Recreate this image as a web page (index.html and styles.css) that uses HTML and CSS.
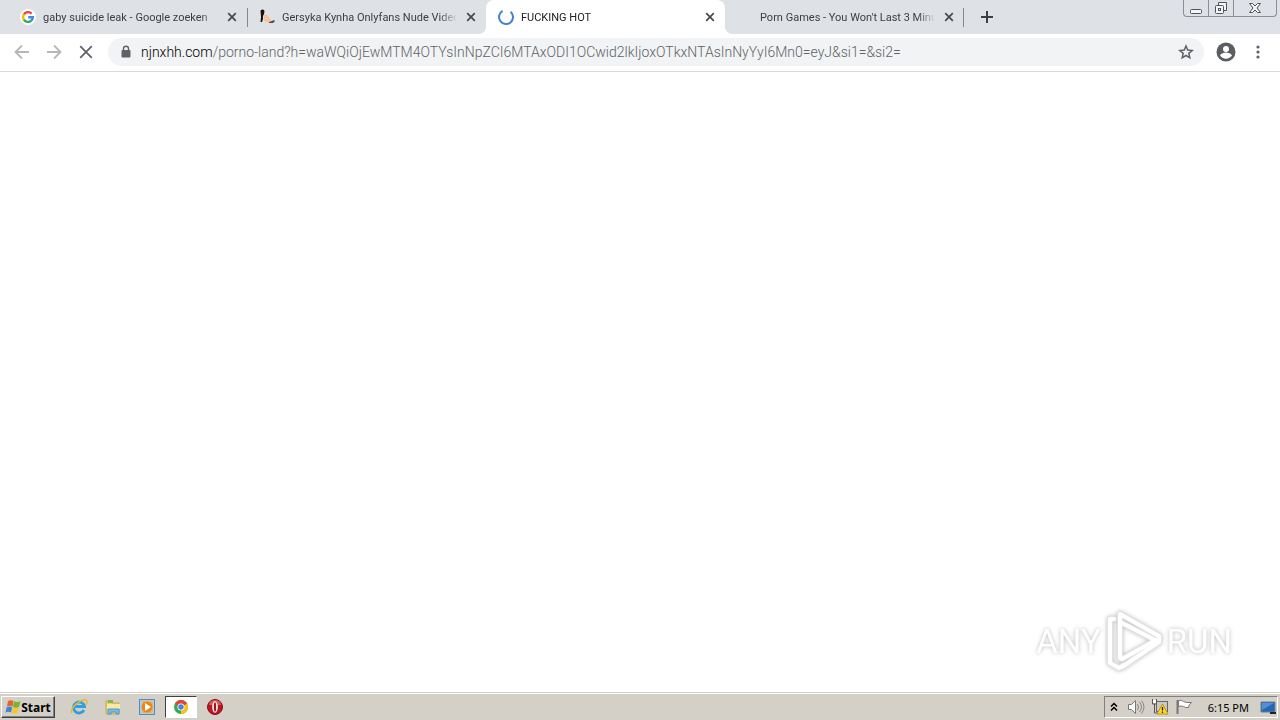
FILE: index.html
```html
<!DOCTYPE html>
<html lang="en">
<head>
<meta charset="utf-8">
<title>Browser desktop</title>
<link rel="stylesheet" href="styles.css">
</head>
<body>
<header class="tabstrip">
  <div class="tab">
    <svg class="favicon" viewBox="0 0 16 16"><circle cx="8" cy="8" r="8" fill="#fff"/><g fill="none" stroke-width="2.4"><path d="M4 5.4A4.8 4.8 0 0 1 11.6 4.6" stroke="#ea4335"/><path d="M4 5.2a4.8 4.8 0 0 0 0 5.6" stroke="#fbbc05"/><path d="M3.9 10.6a4.8 4.8 0 0 0 7.4 1" stroke="#34a853"/><path d="M8.2 8.2h4.6a4.8 4.8 0 0 1-1.6 3.5" stroke="#4285f4"/></g></svg>
    <button class="title">gaby suicide leak - Google zoeken</button>
    <button class="close" aria-label="Close tab"><svg viewBox="0 0 10 10"><path d="M1.2 1.2l7.6 7.6M8.8 1.2l-7.6 7.6"/></svg></button>
  </div>
  <div class="tab divided">
    <svg class="favicon" viewBox="0 0 16 16"><path d="M5 6c2-1 4 0 5 2l3 4-3 2-5-2z" fill="#f8c3a4"/><path d="M1.500 1.500Q4-.5 5.500 2L5 5l-1 2v3l-1 3H1.500L2 8z" fill="#17120f"/><path d="M10 13l3-1 2-1 1 1-2 2h-4z" fill="#5b4642"/></svg>
    <button class="title">Gersyka Kynha Onlyfans Nude Video</button>
    <button class="close" aria-label="Close tab"><svg viewBox="0 0 10 10"><path d="M1.2 1.2l7.6 7.6M8.8 1.2l-7.6 7.6"/></svg></button>
  </div>
  <div class="tab active">
    <svg class="favicon" viewBox="0 0 16 16"><path d="M4.6 1.9A7 7 0 1 0 12.6 2.7" fill="none" stroke="#4a7fd0" stroke-width="2"/></svg>
    <button class="title">FUCKING HOT</button>
    <button class="close" aria-label="Close tab"><svg viewBox="0 0 10 10"><path d="M1.2 1.2l7.6 7.6M8.8 1.2l-7.6 7.6"/></svg></button>
  </div>
  <div class="tab last">
    <span class="favicon"></span>
    <button class="title">Porn Games - You Won't Last 3 Minut</button>
    <button class="close" aria-label="Close tab"><svg viewBox="0 0 10 10"><path d="M1.2 1.2l7.6 7.6M8.8 1.2l-7.6 7.6"/></svg></button>
  </div>
  <button class="newtab" aria-label="New tab"><svg viewBox="0 0 12 12"><path d="M6 0v12M0 6h12"/></svg></button>
  <div class="winctl">
    <button aria-label="Minimize"><svg viewBox="0 0 14 14"><rect x="1.5" y="8.5" width="11" height="4" rx="1"/></svg></button>
    <button aria-label="Restore"><svg viewBox="0 0 14 14"><path d="M4.500 4.500v-3h8v8h-3"/><rect x="1.500" y="4.500" width="8" height="8" rx="1"/><rect x="4.500" y="7.500" width="2" height="2"/></svg></button>
    <button class="wide" aria-label="Close"><svg viewBox="0 0 14 14"><path d="M1.500 2.500h3l2.500 2.500 2.500-2.500h3L9 7l3.500 4.500h-3L7 9l-2.500 2.500h-3L5 7z"/></svg></button>
  </div>
</header>
<nav class="toolbar">
  <button class="nav" aria-label="Back" disabled><svg viewBox="0 0 16 16"><path d="M15 8H2M8 1.500L1.500 8 8 14.500"/></svg></button>
  <button class="nav" aria-label="Forward" disabled><svg viewBox="0 0 16 16"><path d="M1 8h13M8 1.500L14.500 8 8 14.500"/></svg></button>
  <button class="nav" aria-label="Stop loading"><svg viewBox="0 0 16 16"><path d="M2.200 2.200l11.600 11.600M13.800 2.200L2.200 13.800"/></svg></button>
  <div class="omnibox">
    <svg class="lock" viewBox="0 0 12 14"><rect x="1.500" y="5" width="9" height="7.500" rx="1" fill="#5f6368"/><path d="M3.500 5.500V3.700a2.500 2.500 0 0 1 5 0v1.800" fill="none" stroke="#5f6368" stroke-width="1.400"/></svg>
    <a class="url" href="#"><b>njnxhh.com</b>/porno-land?h=waWQiOjEwMTM4OTYsInNpZCI6MTAxODI1OCwid2lkIjoxOTkxNTAsInNyYyI6Mn0=eyJ&amp;si1=&amp;si2=</a>
    <button class="star" aria-label="Bookmark this page"><svg viewBox="0 0 16 16"><path d="M8 2l1.700 4.100 4.500.4-3.400 2.900 1 4.400L8 11.500l-3.800 2.300 1-4.400L1.800 6.500l4.500-.4z"/></svg></button>
  </div>
  <button class="profile" aria-label="Profile"><svg viewBox="0 0 20 20"><circle cx="10" cy="10" r="9.500" fill="#5a5d62"/><circle cx="10" cy="7" r="3" fill="#fff"/><path d="M4 13.500c1-2.200 4-3 6-3s5 .8 6 3c-1.300 2-3.500 3.200-6 3.200s-4.700-1.200-6-3.200z" fill="#fff"/></svg></button>
  <button class="more" aria-label="Menu"><svg viewBox="0 0 4 14"><circle cx="2" cy="2" r="1.600"/><circle cx="2" cy="7" r="1.600"/><circle cx="2" cy="12" r="1.600"/></svg></button>
</nav>
<main class="page">
  <div class="watermark">
    <span>ANY</span>
    <svg viewBox="0 0 58 62"><g fill="none" stroke-linejoin="round" stroke-linecap="round"><path d="M9 9H5v44l9 5 5-3M15 4v44M15 4l39 22v6L17 57M15 4v8l39 20M17 49l34-19" stroke="#e2e2e2" stroke-width="6"/><path d="M9 9H5v44l9 5 5-3M15 4v44M15 4l39 22v6L17 57M15 4v8l39 20M17 49l34-19" stroke="#fff" stroke-width="4"/></g></svg>
    <span>RUN</span>
  </div>
</main>
<footer class="taskbar">
  <button class="start"><svg viewBox="0 0 16 16"><path d="M3 2c2-1 3.500-1 5.500 0L7.500 7.500c-2-1-3.500-1-5.500 0z" fill="#e8622a"/><path d="M9 2.300c2 1 4 1 6.500 0L14 8c-2 1-4 1-6 0z" fill="#79b530"/><path d="M1.700 8.200c2-1 3.500-1 5.500 0L6 13.500c-2-1-3.500-1-5.500 0z" fill="#3b85d8"/><path d="M7.700 8.700c2 1 4 1 6 0L12.500 14c-2 1-4 1-6 0z" fill="#f7c52c"/></svg>Start</button>
  <div class="launch">
    <button aria-label="Internet Explorer"><svg viewBox="0 0 18 18"><path d="M14 12a5.500 5.500 0 1 1 .5-3.500H5" fill="none" stroke="#2da0df" stroke-width="2.800"/><path d="M2 15C-1 10 13-1 16.500 2.500c1 1 .3 3-1 4.500" fill="none" stroke="#e9b735" stroke-width="1.500"/></svg></button>
    <button aria-label="Explorer"><svg viewBox="0 0 18 18"><path d="M2 3h5l1 2h7v11H2z" fill="#efd071" stroke="#c9a64c"/><path d="M4 2h5v3H4z" fill="#7cb95c"/><path d="M3 6h13v5H3z" fill="#fae9a4"/><path d="M4 16v-5h11v5h-3v-2H7v2z" fill="#76bce6" stroke="#4c99cc"/></svg></button>
    <button aria-label="Media Player"><svg viewBox="0 0 18 18"><rect x="1.500" y="1.500" width="15" height="15" fill="#a4d0ef" stroke="#4c8fc4"/><rect x="4" y="3" width="11" height="12" rx="1" fill="#f6b25a"/><circle cx="9" cy="9" r="5.500" fill="#ee8317"/><path d="M7 5l6 4-6 4z" fill="#fff"/></svg></button>
    <button class="pressed" aria-label="Chrome"><svg viewBox="0 0 18 18"><circle cx="9" cy="9" r="7" fill="#38a853"/><path d="M9 9L2.900 5.500A7 7 0 0 1 15.100 5.500z" fill="#e64435"/><path d="M9 9l6.100-3.500A7 7 0 0 1 9 16z" fill="#fbc116"/><path d="M9 5.500h6.100L9 9z" fill="#e64435"/><circle cx="9" cy="9" r="3.500" fill="#fff"/><circle cx="9" cy="9" r="2.700" fill="#4285e4"/></svg></button>
    <button aria-label="Opera"><svg viewBox="0 0 18 18"><circle cx="9" cy="9" r="7.500" fill="#bd1620" stroke="#7c1118"/><path d="M3 7a6 5 0 0 1 12 0z" fill="#d85a5c"/><ellipse cx="9" cy="9" rx="2.800" ry="5.800" fill="#fff"/><ellipse cx="9" cy="9" rx="1.200" ry="4.800" fill="#a3131b"/></svg></button>
  </div>
  <div class="tray">
    <button class="up" aria-label="Show hidden icons"><svg viewBox="0 0 8 10"><path d="M1 4.500l3-3 3 3M1 8.500l3-3 3 3" fill="none" stroke="#000" stroke-width="1.500"/></svg></button>
    <button aria-label="Volume"><svg viewBox="0 0 18 18"><path d="M1.500 6.500h3l4-4v13l-4-4h-3z" fill="#fafafa" stroke="#777"/><path d="M10.500 6q2 3 0 6M12.500 4q4 5 0 10M14.500 2.500q5 6.500 0 13" fill="none" stroke="#888"/></svg></button>
    <button aria-label="Network"><svg viewBox="0 0 18 18"><rect x="5.500" y="3.500" width="11" height="10" fill="#cbc9c2" stroke="#666"/><path d="M1.500 1v5h4V1M3.500 6v9h6" fill="none" stroke="#555"/><path d="M2 2h3v3H2z" fill="#fff"/><path d="M11.500 6l5.500 10H6z" fill="#ffdc22" stroke="#b99514"/><path d="M11.500 9v3.500M11.500 13.500v1.500" stroke="#222" stroke-width="1.300"/></svg></button>
    <button aria-label="Action Center"><svg viewBox="0 0 18 18"><path d="M2.500 2v14" stroke="#777" stroke-width="2"/><path d="M3.500 2.500q3-1 5 1 2 1.500 8 1-3 2-3 5-3 .5-5-1-2-1-5 0z" fill="#fff" stroke="#777"/></svg></button>
    <time>6:15 PM</time>
    <button class="desk" aria-label="Show desktop"><svg viewBox="0 0 18 18"><path d="M2 4h14v10H2z" fill="#2467b5" stroke="#6b7f94"/><path d="M3 5h12L3 12z" fill="#558fd0"/><path d="M11 15h6" stroke="#222" stroke-width="2"/></svg></button>
  </div>
</footer>
</body>
</html>
```
FILE: styles.css
```css
* { box-sizing: border-box; }
body {
  margin: 0;
  min-height: 100vh;
  display: flex;
  flex-direction: column;
  background: #fff;
  color: #3c4043;
  font-family: Roboto, sans-serif;
  font-size: 11px;
}
button {
  margin: 0;
  padding: 0;
  border: 0;
  background: none;
  color: inherit;
  font: inherit;
  display: flex;
  align-items: center;
  justify-content: center;
  flex: none;
}
svg { display: block; flex: none; }

.tabstrip {
  display: flex;
  height: 34px;
  padding-left: 8px;
  background: #dee1e6;
}
.tab {
  flex: 0 1 239px;
  min-width: 0;
  display: flex;
  align-items: center;
  padding: 0 9px 0 12px;
  position: relative;
}
.favicon { width: 16px; height: 16px; flex: none; }
.title {
  flex: 1;
  min-width: 0;
  margin: 0 4px 0 7px;
  justify-content: flex-start;
  overflow: hidden;
  white-space: nowrap;
  -webkit-mask-image: linear-gradient(to right, #000 88%, transparent 98%);
  mask-image: linear-gradient(to right, #000 88%, transparent 98%);
}
.close { width: 12px; height: 16px; }
.close svg { width: 10px; height: 10px; stroke: #45494d; stroke-width: 1.7; }
.divided::before, .last::after {
  content: "";
  position: absolute;
  left: 0;
  top: 8px;
  width: 1px;
  height: 19px;
  background: #85888d;
}
.last::after { left: auto; right: 0; }
.active { background: #fff; border-radius: 8px 8px 0 0; color: #222; }
.active::before, .active::after {
  content: "";
  position: absolute;
  bottom: 0;
  width: 8px;
  height: 8px;
}
.active::before { left: -8px; background: radial-gradient(circle at 0 0, transparent 8px, #fff 8px); }
.active::after { right: -8px; background: radial-gradient(circle at 100% 0, transparent 8px, #fff 8px); }
.newtab { width: 46px; }
.newtab svg { width: 12px; height: 12px; stroke: #3c4043; stroke-width: 2; }
.winctl {
  display: flex;
  height: 17px;
  margin: 0 3px 0 auto;
  border: 1px solid #8a8e96;
  border-top: 0;
  border-radius: 0 0 4px 4px;
}
.winctl button { width: 25px; border-right: 1px solid #8a8e96; }
.winctl .wide { width: 42px; border-right: 0; }
.winctl svg { width: 14px; height: 14px; fill: #f4f5f7; stroke: #50545c; }

.toolbar {
  display: flex;
  align-items: center;
  height: 38px;
  padding: 0 12px 2px 6px;
  border-bottom: 1px solid #d8dadc;
}
.nav { width: 32px; height: 32px; }
.nav svg { width: 16px; height: 16px; fill: none; stroke: #5f6368; stroke-width: 1.8; }
.nav:disabled svg { stroke: #b5b7b9; }
.omnibox {
  flex: 1;
  min-width: 0;
  display: flex;
  align-items: center;
  height: 28px;
  margin: 0 10px 0 6px;
  padding: 0 10px 0 12px;
  border-radius: 14px;
  background: #f1f3f4;
}
.lock { width: 12px; height: 14px; }
.url {
  flex: 1;
  min-width: 0;
  margin-left: 9px;
  overflow: hidden;
  white-space: nowrap;
  color: #5f6368;
  font-size: 14px;
  font-weight: 300;
  text-decoration: none;
}
.url b { font-weight: 300; color: #000; }
.star svg { width: 16px; height: 16px; fill: none; stroke: #5f6368; stroke-width: 1.5; }
.profile svg { width: 20px; height: 20px; }
.profile { width: 24px; }
.more { width: 20px; margin-left: 10px; }
.more svg { width: 4px; height: 14px; fill: #5f6368; }

.page {
  flex: 1;
  display: flex;
  align-items: flex-end;
  justify-content: flex-end;
  padding: 0 48px 20px;
}
.watermark {
  display: flex;
  align-items: center;
  gap: 4px;
  color: #fff;
  font-size: 33px;
  filter: drop-shadow(0 0 2px #bbb);
}
.watermark svg { width: 58px; height: 62px; }

.taskbar {
  display: flex;
  align-items: center;
  height: 28px;
  padding: 2px 2px 1px 1px;
  border-top: 1px solid #d4d0c8;
  box-shadow: inset 0 1px #fff;
  background: #d4d0c8;
  color: #000;
}
.start {
  width: 54px;
  height: 22px;
  border: 1px solid;
  border-color: #fff #404040 #404040 #fff;
  box-shadow: inset -1px -1px #808080;
  font-family: "Noto Sans", sans-serif;
  font-size: 12px;
  font-weight: 700;
}
.start svg { width: 16px; height: 16px; }
.launch { display: flex; gap: 2px; margin-left: 8px; }
.launch button { width: 32px; height: 22px; }
.launch svg { width: 18px; height: 18px; }
.launch .pressed {
  border: 1px solid;
  border-color: #404040 #fff #fff #404040;
  background: #fff;
}
.tray {
  display: flex;
  align-items: center;
  height: 22px;
  margin-left: auto;
  padding-left: 5px;
  border: 1px solid;
  border-color: #808080 #fff #fff #808080;
}
.tray button { width: 24px; }
.tray .up { width: 8px; margin-right: 6px; }
.tray .up svg { width: 8px; height: 10px; }
.tray svg { width: 18px; height: 18px; }
.tray .desk { width: 18px; }
.tray time {
  margin: 0 10px 0 12px;
  white-space: nowrap;
  font-family: "Noto Sans", sans-serif;
}
```
